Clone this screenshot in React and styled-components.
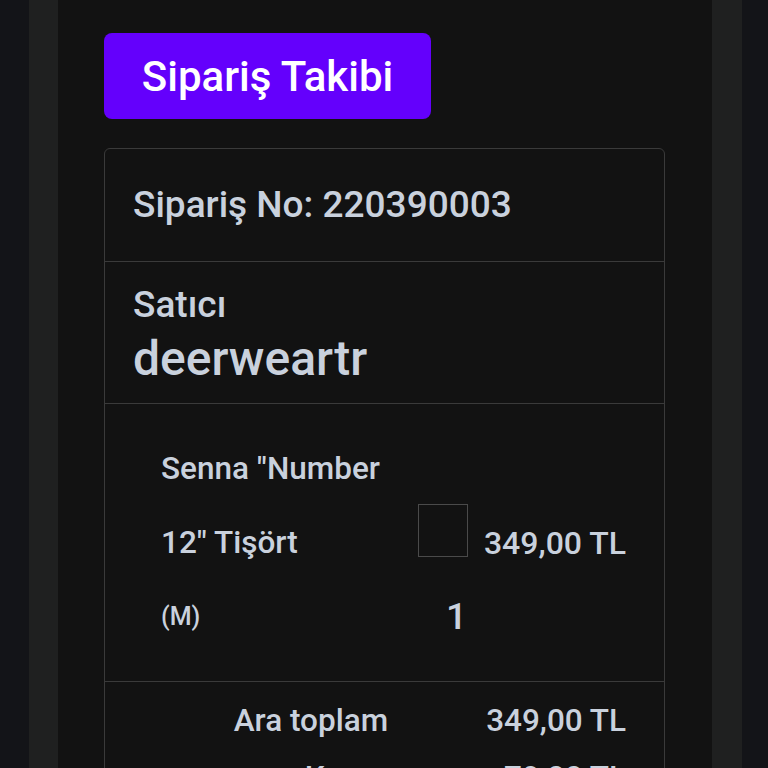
import React from "react";
import styled, { createGlobalStyle } from "styled-components";

const GlobalStyle = createGlobalStyle`
  html, body {
    margin: 0;
    padding: 0;
    background: #131418;
    font-family: Roboto, "Noto Sans", Arial, sans-serif;
  }
`;

const Shell = styled.div`
  margin-left: 29px;
  width: 713px;
  min-height: 100vh;
  box-sizing: border-box;
  padding: 0 30px 0 29px;
  background: #1f2020;
  display: flex;
`;

const Panel = styled.main`
  flex: 1;
  background: #121212;
  padding: 33px 47px 0 46px;
  display: flex;
  flex-direction: column;
  gap: 29px;
`;

const TitleButton = styled.button`
  width: 327px;
  height: 86px;
  border: none;
  border-radius: 8px;
  background: #6400fc;
  color: #ffffff;
  font-family: Roboto, sans-serif;
  font-size: 42px;
  font-weight: 500;
  cursor: pointer;
`;

const Card = styled.section`
  border: 1px solid #3a3a3a;
  border-radius: 6px;
  color: #c9d1dd;
  font-weight: 500;
`;

const Row = styled.div`
  border-top: ${(p) => (p.$first ? "none" : "1px solid #3a3a3a")};
`;

const OrderRow = styled(Row)`
  height: 112px;
  padding: 0 28px;
  display: flex;
  align-items: center;
  font-size: 37px;
  line-height: 44px;
`;

const SellerRow = styled(Row)`
  padding: 21px 28px 16px;
  display: flex;
  flex-direction: column;
  gap: 5px;
`;

const SellerLabel = styled.div`
  font-size: 37px;
  line-height: 43px;
`;

const SellerName = styled.div`
  font-size: 48px;
  line-height: 56px;
`;

const ItemGrid = styled(Row)`
  padding: 28px 38px 27px 56px;
  display: grid;
  grid-template-columns: 1fr 50px auto;
  grid-template-rows: repeat(3, 74px);
  column-gap: 16px;
`;

const NameLine = styled.div`
  grid-column: 1;
  grid-row: ${(p) => p.$row};
  font-size: ${(p) => (p.$small ? "25px" : "31.5px")};
  line-height: 74px;
  white-space: nowrap;
`;

const Thumb = styled.div`
  grid-column: 2;
  grid-row: 2;
  align-self: start;
  margin-top: -2px;
  width: 50px;
  height: 53px;
  box-sizing: border-box;
  border: 1px solid #4a4a4a;
`;

const Qty = styled.div`
  grid-column: 2;
  grid-row: 3;
  justify-self: end;
  margin-right: 1px;
  font-size: 37px;
  line-height: 74px;
`;

const Price = styled.div`
  grid-column: 3;
  grid-row: 2;
  font-size: 32px;
  line-height: 74px;
  white-space: nowrap;
`;

const Summary = styled(Row)`
  padding: 10px 38px 20px 0;
  display: grid;
  grid-template-columns: 1fr auto;
  column-gap: 98px;
  font-size: 31.5px;
  line-height: 57px;
`;

const SumLabel = styled.div`
  justify-self: end;
  white-space: nowrap;
`;

const SumValue = styled.div`
  justify-self: end;
  white-space: nowrap;
`;

const totals = [
  ["Ara toplam", "349,00 TL"],
  ["Kargo", "79,00 TL"],
  ["Toplam", "428,00 TL"],
];

export default function App() {
  return (
    <>
      <GlobalStyle />
      <Shell>
        <Panel>
          <div>
            <TitleButton>Sipariş Takibi</TitleButton>
          </div>
          <Card>
            <OrderRow $first>Sipariş No: 220390003</OrderRow>
            <SellerRow>
              <SellerLabel>Satıcı</SellerLabel>
              <SellerName>deerweartr</SellerName>
            </SellerRow>
            <ItemGrid>
              <NameLine $row={1}>Senna "Number</NameLine>
              <NameLine $row={2}>12" Tişört</NameLine>
              <NameLine $row={3} $small>(M)</NameLine>
              <Thumb />
              <Qty>1</Qty>
              <Price>349,00 TL</Price>
            </ItemGrid>
            <Summary>
              {totals.map(([label, value]) => (
                <React.Fragment key={label}>
                  <SumLabel>{label}</SumLabel>
                  <SumValue>{value}</SumValue>
                </React.Fragment>
              ))}
            </Summary>
          </Card>
        </Panel>
      </Shell>
    </>
  );
}
